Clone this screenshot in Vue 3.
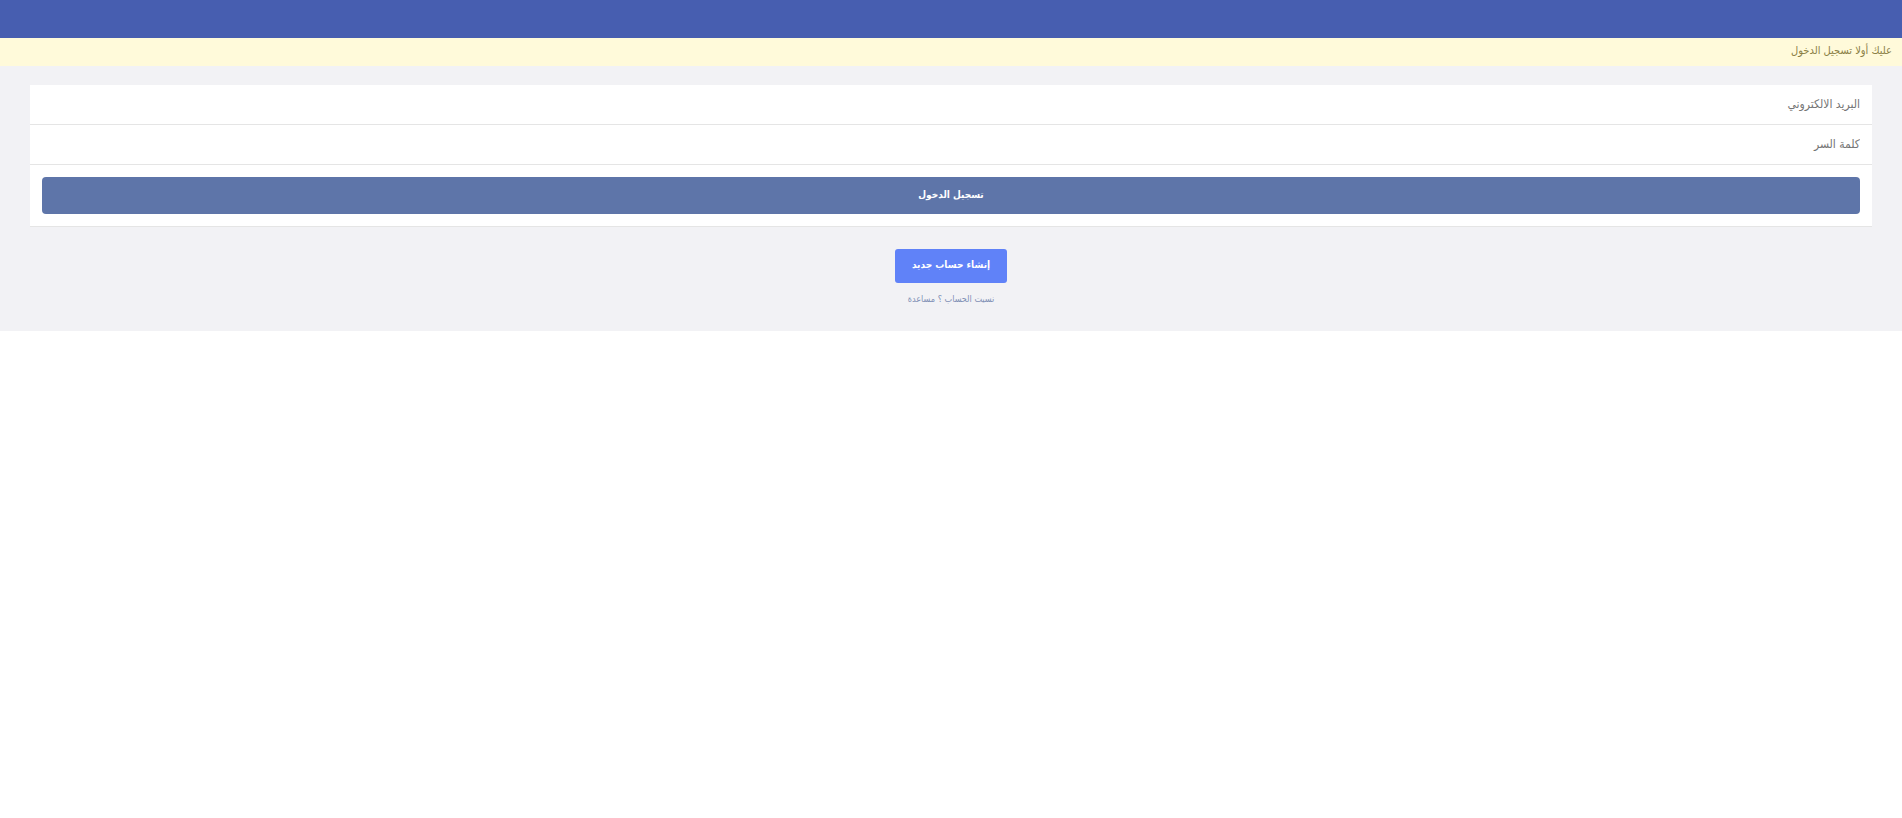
<script setup>
import { ref } from 'vue'

const email = ref('')
const password = ref('')
</script>

<template>
  <div class="page" dir="rtl" lang="ar">
    <header class="topbar"></header>
    <p class="notice">عليك أولا تسجيل الدخول</p>
    <main class="content">
      <form class="login" @submit.prevent>
        <input v-model="email" class="field" type="text" name="email" aria-label="البريد الالكتروني" placeholder="البريد الالكتروني" />
        <input v-model="password" class="field" type="password" name="password" aria-label="كلمة السر" placeholder="كلمة السر" />
        <div class="actions">
          <button class="submit" type="submit">تسجيل الدخول</button>
        </div>
      </form>
      <button class="create" type="button">إنشاء حساب جديد</button>
      <a class="help" href="#">نسيت الحساب ؟ مساعدة</a>
    </main>
  </div>
</template>

<style>
body {
  margin: 0;
  background: #fff;
}
</style>

<style scoped>
.page {
  font-family: "DejaVu Sans Condensed", "DejaVu Sans", sans-serif;
  font-size: 11px;
  background: #f2f2f5;
}
.topbar {
  height: 38px;
  background: #475eb0;
}
.notice {
  margin: 0;
  padding: 3px 10px 5px;
  line-height: 20px;
  background: #fffada;
  color: #8a7f45;
}
.content {
  display: flex;
  flex-direction: column;
  align-items: center;
  padding: 19px 30px 24px;
}
.login {
  align-self: stretch;
  background: #fff;
}
.field {
  display: block;
  box-sizing: border-box;
  width: 100%;
  height: 40px;
  margin: 0;
  padding: 0 12px 2px;
  border: 0;
  border-bottom: 1px solid #e5e5e5;
  border-radius: 0;
  outline: 0;
  background: #fff;
  color: #333;
  font: inherit;
  font-size: 12px;
}
.field::placeholder {
  color: #757575;
  opacity: 1;
}
.actions {
  padding: 12px;
  border-bottom: 1px solid #e5e5e5;
}
.submit,
.create {
  display: block;
  margin: 0;
  border: 0;
  color: #fff;
  font: inherit;
  font-size: 10px;
  font-weight: bold;
  cursor: pointer;
}
.submit {
  width: 100%;
  height: 37px;
  padding: 0 0 2px;
  border-radius: 4px;
  background: #5e75a9;
}
.create {
  height: 34px;
  margin-top: 22px;
  padding: 0 17px 3px;
  border-radius: 3px;
  background: #6082f8;
}
.help {
  margin-top: 8px;
  line-height: 16px;
  font-size: 9px;
  color: #8190b5;
  text-decoration: none;
}
</style>
